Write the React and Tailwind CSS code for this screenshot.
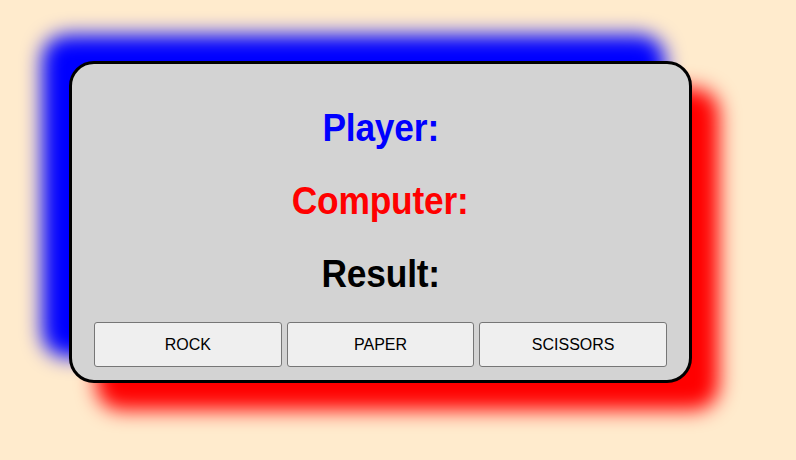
const rows = [
  { label: "Player:", color: "text-[#0000ff]" },
  { label: "Computer:", color: "text-[#ff0000]" },
  { label: "Result:", color: "text-black" },
];

const choices = ["ROCK", "PAPER", "SCISSORS"];

const App = () => {
  return (
    <div className="min-h-[460px] w-full bg-[#ffebcd] pt-[61px] pl-[69px] font-['Liberation_Sans',Arial,sans-serif]">
      <div className="w-[623px] rounded-[25px] border-[3px] border-black bg-[#d3d3d3] pt-[28px] pb-[13px] shadow-[-27px_-26px_20px_#0000ff,27px_27px_20px_#ff0000]">
        <div className="flex flex-col">
          {rows.map((row) => (
            <h1
              key={row.label}
              className={`h-[73px] flex items-center justify-center text-[38px] font-bold tracking-[-0.2px] ${row.color}`}
            >
              <span className="inline-block scale-x-[0.93]">{row.label}</span>
            </h1>
          ))}
        </div>
        <div className="mt-[11px] flex gap-[5px] px-[22px]">
          {choices.map((choice) => (
            <button
              key={choice}
              className="h-[45px] flex-1 rounded-[3px] border border-[#767676] bg-[#efefef] text-[16px] text-black"
            >
              {choice}
            </button>
          ))}
        </div>
      </div>
    </div>
  );
};

export default App;
